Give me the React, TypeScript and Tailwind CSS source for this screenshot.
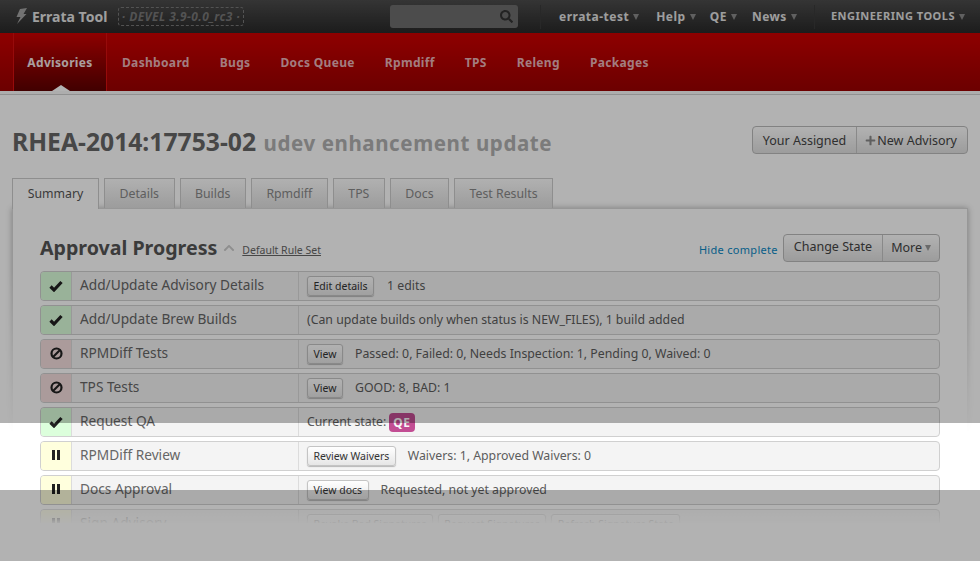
import { FaChevronUp, FaPlus, FaSearch } from "react-icons/fa";

const font = { fontFamily: '"Noto Sans", "Open Sans", sans-serif' };

const navItems = ["Dashboard", "Bugs", "Docs Queue", "Rpmdiff", "TPS", "Releng", "Packages"];
const tabs = ["Details", "Builds", "Rpmdiff", "TPS", "Docs", "Test Results"];

function Caret({ className = "border-t-[#8a8a8a]" }: { className?: string }) {
  return <span className={`inline-block w-0 h-0 border-x-[3.5px] border-x-transparent border-t-[6px] ${className}`} />;
}

function TopLink({ label, className = "text-[12px] tracking-[0.5px]" }: { label: string; className?: string }) {
  return (
    <span className={`flex items-center gap-[4px] whitespace-nowrap font-bold text-[#e2e2e2] ${className}`}>
      {label}
      <Caret />
    </span>
  );
}

function SmallButton({ label }: { label: string }) {
  return (
    <button className="h-[20px] px-[5.5px] shrink-0 rounded-[3px] border border-[#c4c4c4] bg-gradient-to-b from-white to-[#e6e6e6] shadow-[0_1px_1px_rgba(0,0,0,0.25)] text-[10.5px] leading-[17px] text-[#333]">
      {label}
    </button>
  );
}

function StatusIcon({ status }: { status: "ok" | "block" | "wait" }) {
  if (status === "block") {
    return (
      <svg width="13" height="13" viewBox="0 0 13 13" className="-mt-[2px]">
        <circle cx="6.5" cy="6.5" r="5" fill="none" stroke="#222" strokeWidth="2.2" />
        <line x1="3" y1="10" x2="10" y2="3" stroke="#222" strokeWidth="2.2" />
      </svg>
    );
  }
  if (status === "wait") {
    return (
      <svg width="8" height="10" viewBox="0 0 8 10" className="-mt-[3px]">
        <rect x="0" y="0" width="3" height="10" fill="#222" />
        <rect x="5" y="0" width="3" height="10" fill="#222" />
      </svg>
    );
  }
  return (
    <svg width="14" height="12" viewBox="0 0 14 12" className="-mt-[1px]">
      <path d="M1.5 6.5 L5 10 L12.5 2" fill="none" stroke="#222" strokeWidth="3.2" />
    </svg>
  );
}

function StepRow({
  status,
  title,
  children,
}: {
  status: "ok" | "block" | "wait";
  title: string;
  children: React.ReactNode;
}) {
  const cell = status === "block" ? "bg-[#f5dfdf]" : status === "wait" ? "bg-[#ffffdd]" : "bg-[#dcffdc]";
  return (
    <div className="flex h-[30px] rounded-[4px] border border-[#d0d0d0] bg-[#f4f4f4] overflow-hidden">
      <div className={`w-[31px] shrink-0 flex items-center justify-center border-r border-[#dcdcdc] ${cell}`}>
        <StatusIcon status={status} />
      </div>
      <div className="w-[227px] shrink-0 pl-[8px] border-r border-[#dcdcdc] text-[13.7px] leading-[26px] text-[#666]">{title}</div>
      <div className="flex-1 flex items-center pl-[8px] text-[12.3px] text-[#5c5c5c]">{children}</div>
    </div>
  );
}

export default function App() {
  return (
    <div className="relative h-[561px] w-[980px] overflow-hidden bg-white" style={font}>
      {/* top bar */}
      <div className="flex items-center h-[33px] bg-gradient-to-b from-[#4c4c4c] to-[#292929]">
        <svg width="12" height="17" viewBox="0 0 12 17" className="ml-[16px] shrink-0">
          <polygon points="4,1 11,0 7.5,6 10.5,6 1,16 4.5,9 0.5,9" fill="#a4a4a4" />
        </svg>
        <span className="ml-[4px] w-[76px] whitespace-nowrap text-[14px] font-bold text-[#e4e4e4]">Errata Tool</span>
        <span className="ml-[10px] h-[19px] w-[126px] flex items-center justify-center rounded-[3px] border border-dashed border-[#777] text-[12px] italic font-bold tracking-[0.4px] text-[#777] whitespace-nowrap">
          · DEVEL 3.9-0.0_rc3 ·
        </span>
        <div className="ml-[146px] h-[23px] w-[128px] flex items-center justify-end pr-[5px] rounded-[3px] bg-[#6e6e6e]">
          <FaSearch size={13} className="text-[#333]" />
        </div>
        <div className="ml-[22px] h-[24px] w-px bg-[#3a3a3a]" />
        <TopLink label="errata-test" className="ml-[18px] text-[12px] tracking-[0.5px]" />
        <TopLink label="Help" className="ml-[17px] text-[12px] tracking-[0.5px]" />
        <TopLink label="QE" className="ml-[14px] text-[12px] tracking-[0.5px]" />
        <TopLink label="News" className="ml-[15px] text-[12px] tracking-[0.5px]" />
        <div className="ml-[17px] h-[24px] w-px bg-[#3a3a3a]" />
        <TopLink label="ENGINEERING TOOLS" className="ml-[16px] text-[11px] tracking-[0.5px]" />
      </div>

      {/* red nav */}
      <div className="flex h-[58px] pl-[13px] bg-gradient-to-b from-[#cc0000] to-[#9b0000]">
        <div className="relative w-[94px] pt-[21px] text-center bg-gradient-to-b from-[#cc0000] to-[#5e0000] border-x border-[#d81010] text-[12px] font-bold tracking-[0.33px] text-[#f4e4e4]">
          Advisories
          <span className="absolute left-[38px] bottom-0 w-0 h-0 border-x-[9px] border-x-transparent border-b-[6px] border-b-white" />
        </div>
        <div className="flex">
          {navItems.map((item) => (
            <div key={item} className="px-[15px] pt-[21px] text-[12px] font-bold tracking-[0.33px] text-[#e9b4b8]">
              {item}
            </div>
          ))}
        </div>
      </div>
      <div className="h-[4px] border-b border-[#d0d0d0] bg-[#f8f8f8]" />

      {/* title */}
      <div className="flex items-start justify-between px-[12px] pt-[31px]">
        <h1 className="text-[24.7px] leading-[32px] font-bold text-[#666] whitespace-nowrap">
          RHEA-2014:17753-02{" "}
          <span className="ml-[1px] text-[20.5px] tracking-[0.6px] text-[#b0b0b0]">udev enhancement update</span>
        </h1>
        <div className="flex h-[28px] rounded-[4px] border border-[#bbb] bg-gradient-to-b from-white to-[#e0e0e0] text-[12.5px] leading-[27px] text-[#444]">
          <span className="px-[10px] border-r border-[#c4c4c4]">Your Assigned</span>
          <span className="flex items-center gap-[1px] pl-[8px] pr-[10px]">
            <FaPlus size={11} className="text-[#888]" />
            New Advisory
          </span>
        </div>
      </div>

      {/* tabs */}
      <div className="relative z-10 flex gap-[5px] px-[12px] mt-[19px] h-[30px] text-[12.3px]">
        <div className="h-[31px] w-[87px] text-center leading-[29px] border border-b-0 border-[#ccc] bg-white text-[#555]">Summary</div>
        {tabs.map((t) => (
          <div
            key={t}
            className="h-[30px] px-[14.5px] leading-[29px] border border-b-0 border-[#ccc] bg-gradient-to-b from-[#fdfdfd] to-[#e0e0e0] text-[#888]"
          >
            {t}
          </div>
        ))}
      </div>

      {/* card */}
      <div className="relative mx-[12px] h-[400px] bg-white">
        {/* the frame and its shadow die away towards the bottom */}
        <div className="absolute -inset-x-[10px] -top-[10px] h-[235px] [mask-image:linear-gradient(black_30%,transparent)]">
          <div className="m-[10px] h-[300px] border border-[#d8d8d8] shadow-[0_0_6px_rgba(0,0,0,0.3)]" />
        </div>
        <div className="relative px-[28px] pt-[26px]">
          <div className="flex items-center h-[28px]">
            <h2 className="text-[19.6px] leading-[28px] font-bold text-[#555]">Approval Progress</h2>
            <FaChevronUp size={12} className="ml-[6px] text-[#ccc]" />
            <span className="ml-[7px] mt-[5px] text-[10.5px] underline text-[#666]">Default Rule Set</span>
            <span className="ml-auto mt-[5px] text-[11px] tracking-[0.3px] text-[#0a88c4]">Hide complete</span>
            <div className="ml-[5px] flex h-[28px] rounded-[4px] border border-[#bbb] bg-gradient-to-b from-white to-[#e0e0e0] text-[12.5px] leading-[24px] text-[#444]">
              <span className="px-[10px] border-r border-[#c4c4c4]">Change State</span>
              <span className="flex items-center gap-[3px] pl-[8px] pr-[8px]">
                More
                <Caret className="border-t-[#999]" />
              </span>
            </div>
          </div>

          <div className="flex flex-col gap-[4px] mt-[9px]">
            <StepRow status="ok" title="Add/Update Advisory Details">
              <SmallButton label="Edit details" />
              <span className="ml-[13px]">1 edits</span>
            </StepRow>
            <StepRow status="ok" title="Add/Update Brew Builds">
              (Can update builds only when status is NEW_FILES), 1 build added
            </StepRow>
            <StepRow status="block" title="RPMDiff Tests">
              <SmallButton label="View" />
              <span className="ml-[12px]">Passed: 0, Failed: 0, Needs Inspection: 1, Pending 0, Waived: 0</span>
            </StepRow>
            <StepRow status="block" title="TPS Tests">
              <SmallButton label="View" />
              <span className="ml-[12px]">GOOD: 8, BAD: 1</span>
            </StepRow>
            <StepRow status="ok" title="Request QA">
              Current state:
              <span className="ml-[3px] h-[19px] px-[4px] rounded-[4px] bg-[#c24d93] text-[12px] leading-[19px] font-bold tracking-[0.5px] text-[#f8f8f8]">QE</span>
            </StepRow>
            <StepRow status="wait" title="RPMDiff Review">
              <SmallButton label="Review Waivers" />
              <span className="ml-[12px]">Waivers: 1, Approved Waivers: 0</span>
            </StepRow>
            <StepRow status="wait" title="Docs Approval">
              <SmallButton label="View docs" />
              <span className="ml-[12px]">Requested, not yet approved</span>
            </StepRow>
            <StepRow status="wait" title="Sign Advisory">
              <div className="flex gap-[5px]">
                <SmallButton label="Revoke Bad Signatures" />
                <SmallButton label="Request Signatures" />
                <SmallButton label="Refresh Signature State" />
              </div>
            </StepRow>
          </div>
        </div>
      </div>

      {/* fade out of the cropped page */}
      <div className="absolute z-20 inset-x-0 top-[505px] h-[18px] bg-gradient-to-b from-white/30 to-white/95" />
      <div className="absolute z-20 inset-x-0 top-[523px] bottom-0 bg-white" />

      {/* spotlight overlays */}
      <div className="absolute z-30 inset-x-0 top-0 h-[423px] bg-black/30" />
      <div className="absolute z-30 inset-x-0 top-[490px] bottom-0 bg-black/30" />
    </div>
  );
}
